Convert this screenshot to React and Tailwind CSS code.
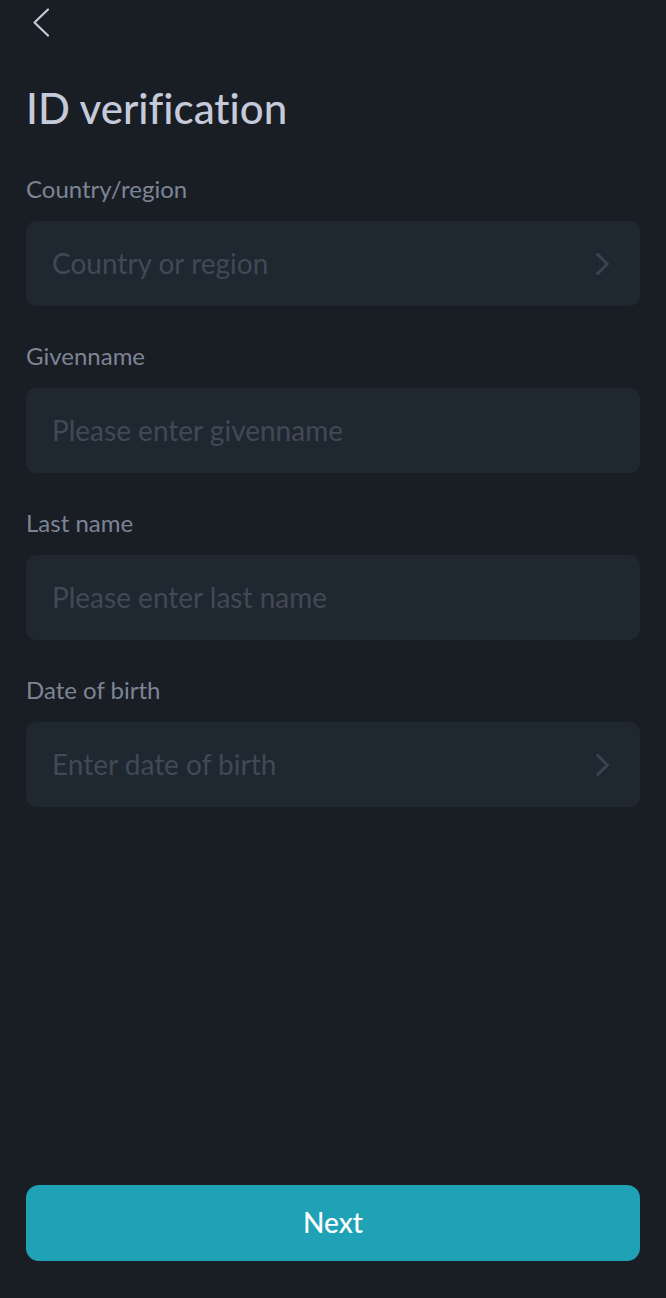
import React, { useState } from 'react';

const fields = [
    { id: 'country', label: 'Country/region', placeholder: 'Country or region', type: 'select' },
    { id: 'givenName', label: 'Givenname', placeholder: 'Please enter givenname', type: 'text' },
    { id: 'lastName', label: 'Last name', placeholder: 'Please enter last name', type: 'text' },
    { id: 'birthDate', label: 'Date of birth', placeholder: 'Enter date of birth', type: 'date' },
];

const countries = ['Canada', 'France', 'Germany', 'Japan', 'United Kingdom'];

const ChevronRight = () => (
    <svg className="w-4 h-6 mr-1 shrink-0 pointer-events-none" viewBox="0 0 16 24" fill="none" stroke="#3c4350" strokeWidth="3" aria-hidden="true">
        <path d="M2.800 1.500L13.300 12L2.800 22.500" />
    </svg>
);

const Field = ({ field, value, onChange }) => {
    const control = 'w-full min-w-0 flex-1 self-stretch bg-transparent pb-0.5 text-[28px] outline-none placeholder:text-[#424956] placeholder:opacity-100';

    return (
        <div className="flex flex-col gap-4">
            <label htmlFor={field.id} className="text-2xl leading-8 text-[#7c8595]">{field.label}</label>
            <div className="flex items-center h-[85px] px-[26px] rounded-[10px] bg-[#1f2730]">
                {field.type === 'select' ? (
                    <select
                        id={field.id}
                        value={value}
                        onChange={(e) => onChange(field.id, e.target.value)}
                        className={`${control} appearance-none ${value ? 'text-[#c5cada]' : 'text-[#424956]'}`}
                    >
                        <option value="" disabled>{field.placeholder}</option>
                        {countries.map((c) => <option key={c} value={c}>{c}</option>)}
                    </select>
                ) : (
                    <input
                        id={field.id}
                        type="text"
                        value={value}
                        onChange={(e) => onChange(field.id, e.target.value)}
                        placeholder={field.placeholder}
                        className={`${control} text-[#c5cada]`}
                    />
                )}
                {field.type !== 'text' && <ChevronRight />}
            </div>
        </div>
    );
};

const App = () => {
    const [form, setForm] = useState({ country: '', givenName: '', lastName: '', birthDate: '' });

    const handleChange = (id, value) => {
        setForm({ ...form, [id]: value });
    };

    return (
        <div className="min-h-screen flex flex-col bg-[#191d24] px-[26px] font-['Lato',sans-serif] [font-variant-ligatures:none]">
            <header className="h-[46px] flex items-center">
                <button type="button" aria-label="Back" className="p-1">
                    <svg className="w-6 h-8" viewBox="0 0 24 32" fill="none" stroke="#c5cada" strokeWidth="2.2" strokeLinecap="round" strokeLinejoin="round" aria-hidden="true">
                        <path d="M18 2.500L4.500 15.500L18 28.500" />
                    </svg>
                </button>
            </header>

            <form className="flex-1 flex flex-col" onSubmit={(e) => e.preventDefault()}>
                <h1 className="mt-9 text-[42px] leading-[52px] font-medium text-[#c5cada]">ID verification</h1>

                <div className="mt-[39px] flex flex-col gap-[34px]">
                    {fields.map((field) => (
                        <Field key={field.id} field={field} value={form[field.id]} onChange={handleChange} />
                    ))}
                </div>

                <button type="submit" className="mt-auto mb-[37px] h-[76px] w-full rounded-[13px] bg-[#1fa2b6] pb-0.5 text-[28px] font-medium text-white">
                    Next
                </button>
            </form>
        </div>
    );
};

export default App;
